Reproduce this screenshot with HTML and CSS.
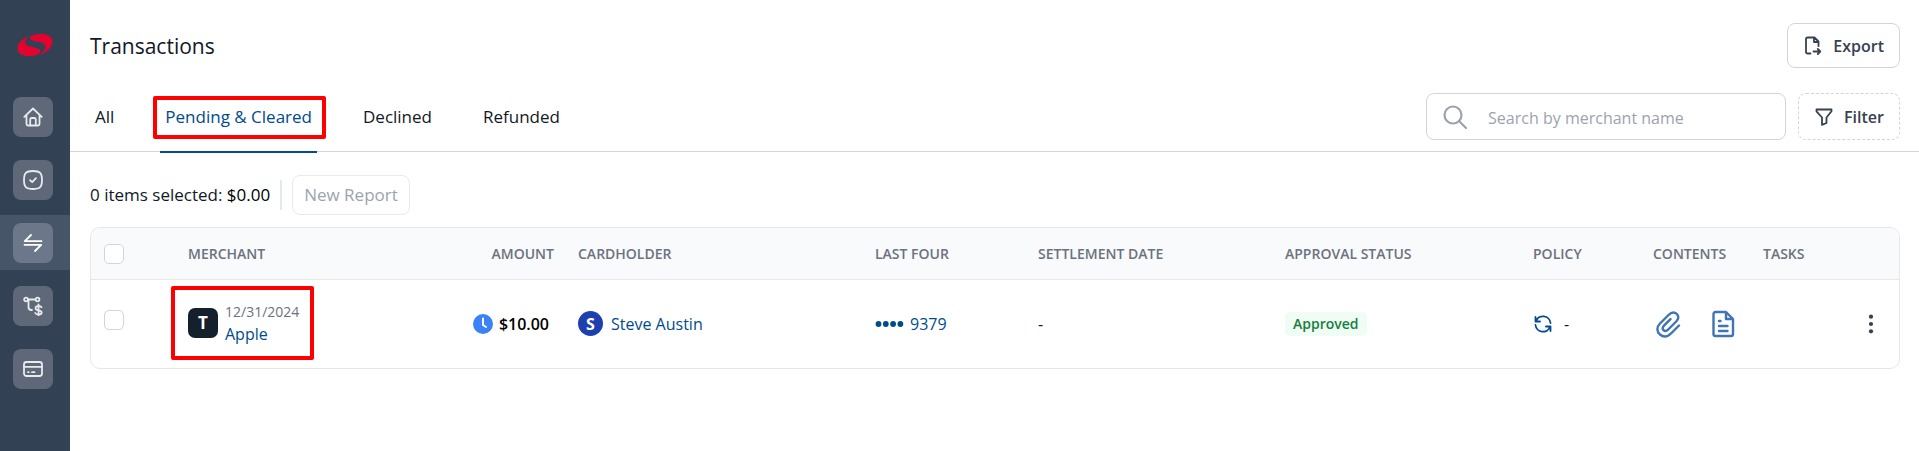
FILE: index.html
```html
<!DOCTYPE html>
<html lang="en">
<head>
<meta charset="utf-8">
<title>Transactions</title>
<link rel="stylesheet" href="styles.css">
</head>
<body>
<div class="app">
  <nav class="sidebar" aria-label="Main">
    <a class="logo" href="#" aria-label="Home page">
      <svg width="36" height="24" viewBox="0 0 36 24"><path fill="#e4032e" d="M15.500 2C7 4 .5 9.500.5 15.500c0 5 5 7.500 12 7.500 5.500 0 9.500-1.300 10.500-4 .8-2-.5-3.300-3.500-4.100l-6-1.400C9 12.300 7 10.500 8.500 7 9.500 4.800 12 3 15.500 2z"/><path fill="#e4032e" d="M21 22.200C29.500 20 35.500 14.500 35.500 8.500c0-5-5-7.500-11.500-7.500-5.500 0-10 1.300-11 3.500-.6 1.600.6 2.600 3.500 3.300l6.500 1.500c4.500 1.200 6.500 3.500 5 6.700-1.200 2.700-3.500 4.500-7 6.200z"/></svg>
    </a>
    <ul class="nav">
      <li class="nav-item"><a href="#" class="nav-link" aria-label="Home"><svg class="i20" viewBox="0 0 20 20"><path d="M1.300 9.800 10 1.500l8.700 8.300M3.500 8.500v8.500a1.500 1.500 0 0 0 1.500 1.500h10a1.500 1.500 0 0 0 1.500-1.500V8.500M7.200 18v-5.500a1.500 1.500 0 0 1 1.500-1.500h2.600a1.500 1.500 0 0 1 1.500 1.500V18"/></svg></a></li>
      <li class="nav-item"><a href="#" class="nav-link" aria-label="Approvals"><svg class="i20" viewBox="0 0 20 20"><path d="M10 1c7 0 9 2 9 9s-2 9-9 9-9-2-9-9 2-9 9-9zM7 10.200l2.200 2L13 8.200"/></svg></a></li>
      <li class="nav-item active"><a href="#" class="nav-link" aria-label="Transactions" aria-current="page"><svg class="i20" viewBox="0 0 20 20"><path d="M18.500 8.200H1.800L8 2M1.500 11.800H18.200L12 18"/></svg></a></li>
      <li class="nav-item"><a href="#" class="nav-link" aria-label="Spend flow"><svg class="i20" viewBox="0 0 20 20"><circle cx="3" cy="3.500" r="1.900"/><circle cx="14.500" cy="3.500" r="1.900"/><path d="M5 3.500h7.500M5.500 3.500V11c0 2 1 3 3 3h.5M18.500 11.300c-.6-1-1.700-1.300-3-1.300-1.700 0-3 .8-3 2.200 0 3 6.200 1.500 6.200 4.300 0 1.400-1.400 2-3.200 2-1.500 0-2.800-.4-3.300-1.500M15.500 8.300V20"/></svg></a></li>
      <li class="nav-item"><a href="#" class="nav-link" aria-label="Cards"><svg class="i20" viewBox="0 0 20 20"><rect x="1" y="3" width="18" height="14" rx="2.500"/><path d="M1 7.800h18M5 13.200h.7M9 13.200h2.500"/></svg></a></li>
    </ul>
  </nav>

  <main class="main">
    <header class="page-head">
      <h1 class="title">Transactions</h1>
      <button type="button" class="btn"><svg class="i20" viewBox="0 0 20 20"><path d="M7.500 17.500H4.500A1.500 1.500 0 0 1 3 16V3a1.500 1.500 0 0 1 1.500-1.500H11.500L15.500 5.500v4.500M11 2V6H15.500M10.500 15.500H17M14.800 13 17.300 15.500l-2.500 2.500"/></svg>Export</button>
    </header>

    <div class="tab-row">
      <div class="tabs" role="tablist">
        <button type="button" role="tab" class="tab">All</button>
        <button type="button" role="tab" class="tab selected" aria-selected="true"><span class="marked marked-tab">Pending &amp; Cleared</span></button>
        <button type="button" role="tab" class="tab">Declined</button>
        <button type="button" role="tab" class="tab">Refunded</button>
      </div>
      <div class="tools">
        <label class="search">
          <svg class="i24" viewBox="0 0 24 24"><circle cx="10" cy="10" r="8.500"/><path d="m16 16 7 7"/></svg>
          <input type="search" class="search-input" placeholder="Search by merchant name" aria-label="Search by merchant name">
        </label>
        <button type="button" class="btn dashed"><svg class="i20" viewBox="0 0 20 20"><path d="M2.500 2.500h15v1.800L12.500 10.500v5.500L8 17.800v-7.300L2.500 4.300z"/></svg>Filter</button>
      </div>
    </div>

    <section class="content">
      <div class="selection">
        <p class="summary">0 items selected: <span class="sum">$0.00</span></p>
        <button type="button" class="btn report" disabled>New Report</button>
      </div>

      <div class="card">
        <table class="table">
          <colgroup>
            <col class="c-check"><col class="c-merchant"><col class="c-amount"><col class="c-holder"><col class="c-four"><col class="c-settle"><col class="c-status"><col class="c-policy"><col class="c-contents"><col class="c-tasks"><col class="c-menu">
          </colgroup>
          <thead>
            <tr>
              <th><input type="checkbox" class="check" aria-label="Select all"></th>
              <th>MERCHANT</th><th class="right">AMOUNT</th><th>CARDHOLDER</th><th>LAST FOUR</th><th>SETTLEMENT DATE</th><th>APPROVAL STATUS</th><th>POLICY</th><th>CONTENTS</th><th>TASKS</th><th></th>
            </tr>
          </thead>
          <tbody>
            <tr>
              <td><input type="checkbox" class="check row-check" aria-label="Select Apple transaction"></td>
              <td>
                <div class="merchant marked marked-cell">
                  <span class="tile">T</span>
                  <div class="merchant-text"><span class="date">12/31/2024</span><a href="#" class="link">Apple</a></div>
                </div>
              </td>
              <td>
                <div class="amount"><svg class="clock" viewBox="0 0 20 20"><circle cx="10" cy="10" r="10" fill="#3b82f6"/><path d="M10 4.500V11l3 2" fill="none" stroke="#fff" stroke-width="2" stroke-linecap="round" stroke-linejoin="round"/></svg>$10.00</div>
              </td>
              <td><div class="holder"><span class="avatar">S</span><a href="#" class="link">Steve Austin</a></div></td>
              <td><a href="#" class="link four"><svg class="dots" viewBox="0 0 30 8"><circle cx="3.500" cy="4" r="2.900"/><circle cx="10.800" cy="4" r="2.900"/><circle cx="18.100" cy="4" r="2.900"/><circle cx="25.400" cy="4" r="2.900"/></svg>9379</a></td>
              <td>-</td>
              <td><span class="badge">Approved</span></td>
              <td><div class="policy"><svg class="i18" viewBox="0 0 18 18"><path d="M1.500 2v4.500H6M2 6.200A7.500 7.500 0 0 1 16.500 8M16.500 16v-4.500H12M16 11.800A7.500 7.500 0 0 1 1.500 10"/></svg>-</div></td>
              <td>
                <div class="contents">
                  <button type="button" class="icon-btn" aria-label="Attachments"><svg class="i28" viewBox="0 0 28 28"><path d="M26 15.500l-7.500 7.500c-4 4-8 4.500-11.500 1.500s-3.500-7.500 0-11l8.500-8.500c3-3 6-3.200 8.200-1.200s2.200 5-.5 7.700l-8 8c-1.800 1.800-3.500 1.800-4.700.7s-1.100-3 .5-4.600l6.500-6.500"/></svg></button>
                  <button type="button" class="icon-btn" aria-label="Memo"><svg class="i28" viewBox="0 0 28 28"><path d="M17 2H6.500a2 2 0 0 0-2 2v20a2 2 0 0 0 2 2h15.500a2 2 0 0 0 2-2V9zM17 2.500V9H23.500M10 11h1.500M10 16h8.500M10 21h8.500"/></svg></button>
                </div>
              </td>
              <td></td>
              <td><button type="button" class="icon-btn menu" aria-label="More actions"><svg class="more" viewBox="0 0 6 20"><circle cx="3" cy="2.700" r="2.100"/><circle cx="3" cy="10" r="2.100"/><circle cx="3" cy="17.300" r="2.100"/></svg></button></td>
            </tr>
          </tbody>
        </table>
      </div>
    </section>
  </main>
</div>
</body>
</html>
```
FILE: styles.css
```css
* { box-sizing: border-box; }
body { margin: 0; background: #fff; color: #111827; font-family: "Open Sans", "Noto Sans", sans-serif; font-size: 16px; line-height: 24px; }
button, input { font: inherit; color: inherit; }
button { cursor: pointer; }
a { text-decoration: none; }
svg { display: block; flex: none; fill: none; stroke: currentColor; stroke-width: 1.6; stroke-linecap: round; stroke-linejoin: round; }
.i18 { width: 18px; height: 18px; stroke-width: 1.8; }
.i20 { width: 20px; height: 20px; stroke-width: 1.8; }
.i24 { width: 24px; height: 24px; stroke-width: 2.2; }
.i28 { width: 28px; height: 28px; stroke-width: 2.4; }

.app { display: flex; min-height: 100vh; }
.sidebar { flex: none; width: 70px; background: #334155; }
.logo { display: flex; justify-content: center; padding: 33px 0 32px; }
.logo svg { stroke: none; }
.nav { display: flex; flex-direction: column; gap: 8px; margin: 0; padding: 0; list-style: none; }
.nav-item { display: flex; align-items: center; height: 55px; padding-left: 13px; }
.nav-item.active { background: #475569; }
.nav-link { display: flex; align-items: center; justify-content: center; width: 40px; height: 40px; border-radius: 8px; background: #5e6879; color: #e8eaed; }
.active .nav-link { background: #6c7789; color: #fff; }

.main { flex: 1; min-width: 0; }
.page-head { display: flex; align-items: center; justify-content: space-between; padding: 23px 19px 0 20px; }
.title { margin: 0; font-size: 21px; line-height: 28px; font-weight: 500; }
.btn { display: flex; align-items: center; gap: 10px; height: 45px; padding: 0 15px; border: 1px solid #d1d5db; border-radius: 8px; background: #fff; color: #374151; font-size: 16px; font-weight: 600; }
.btn.dashed { height: 47px; border-style: dashed; }

.tab-row { display: flex; justify-content: space-between; margin-top: 25px; padding: 0 19px 0 20px; border-bottom: 1px solid #d1d5db; }
.tabs { display: flex; gap: 41px; margin-bottom: -2px; }
.tab { padding: 0 5px 10px; border: 0; border-bottom: 2px solid transparent; background: none; font-size: 17px; font-weight: 500; }
.tab.selected { border-color: #004b8d; color: #004b8d; }
.marked { position: relative; }
.marked::after { content: ""; position: absolute; border: 4px solid #f00; border-radius: 2px; pointer-events: none; }
.marked-tab::after { inset: -9px -14px -11px -12px; }
.marked-cell::after { inset: -15px -15px -15px -17px; }
.tools { display: flex; gap: 12px; padding-bottom: 11px; }
.search { display: flex; align-items: center; gap: 21px; width: 360px; height: 47px; padding: 0 16px; border: 1px solid #d1d5db; border-radius: 8px; color: #9ca3af; }
.search-input { flex: 1; min-width: 0; padding: 2px 0 0; border: 0; outline: 0; background: none; font-size: 16px; }
.search-input::placeholder { color: #9ca3af; opacity: 1; }

.content { padding: 23px 19px 0 20px; }
.selection { display: flex; align-items: center; gap: 10px; margin-bottom: 12px; }
.summary { margin: 0; padding-right: 10px; border-right: 2px solid #e2e8f0; font-size: 17px; line-height: 30px; font-weight: 500; }
.sum { color: #000; }
.report { height: 40px; padding: 0 11px; border-color: #e8eaed; color: #9ca3af; font-size: 17px; font-weight: 500; }

.card { border: 1px solid #e5e7eb; border-radius: 10px; overflow: hidden; }
.table { width: 100%; table-layout: fixed; border-collapse: collapse; }
.c-check { width: 85px; } .c-merchant { width: 270px; } .c-amount { width: 120px; } .c-holder { width: 297px; }
.c-four { width: 163px; } .c-settle { width: 247px; } .c-status { width: 248px; } .c-policy { width: 120px; }
.c-contents { width: 110px; } .c-tasks { width: 90px; } .c-menu { width: 58px; }
.table th, .table td { padding: 0 12px; text-align: left; white-space: nowrap; }
.table th { height: 51px; padding-top: 2px; background: #f9fafb; border-bottom: 1px solid #e5e7eb; color: #6b7280; font-size: 14px; font-weight: 600; }
.table th.right { text-align: right; }
.table td { height: 89px; }
.check { display: block; appearance: none; width: 20px; height: 20px; margin: 0 1px; border: 1px solid #d1d5db; border-radius: 5px; background: #fff; }
.row-check { margin-bottom: 8px; }
.link { color: #004b8d; }
.merchant { display: flex; width: max-content; align-items: center; gap: 7px; margin-bottom: 2px; }
.tile { display: flex; align-items: center; justify-content: center; width: 30px; height: 30px; border-radius: 7px; background: #14202b; color: #fff; font-weight: 700; font-size: 17px; }
.merchant-text { display: flex; flex-direction: column; line-height: 22px; }
.date { color: #6b7280; font-size: 14px; }
.amount { display: flex; align-items: center; justify-content: flex-end; gap: 6px; padding-right: 5px; color: #000; font-weight: 600; }
.clock { width: 20px; height: 20px; stroke: none; }
.holder { display: flex; align-items: center; gap: 8px; }
.avatar { display: flex; align-items: center; justify-content: center; width: 25px; height: 25px; border-radius: 50%; background: #1e40af; color: #fff; font-weight: 700; }
.four { display: flex; align-items: center; gap: 5px; }
.dots { width: 30px; height: 8px; fill: currentColor; stroke: none; }
.badge { display: inline-block; padding: 0 8px; border-radius: 5px; background: #f0fdf4; color: #15803d; font-size: 14px; font-weight: 600; }
.policy { display: flex; align-items: center; gap: 12px; padding-left: 1px; }
.policy svg { color: #004b8d; }
.contents { display: flex; gap: 28px; }
.icon-btn { display: block; padding: 0; border: 0; background: none; color: #3f74b5; }
.menu { padding: 0 15px; color: #374151; }
.more { width: 6px; height: 20px; fill: currentColor; stroke: none; }
```
